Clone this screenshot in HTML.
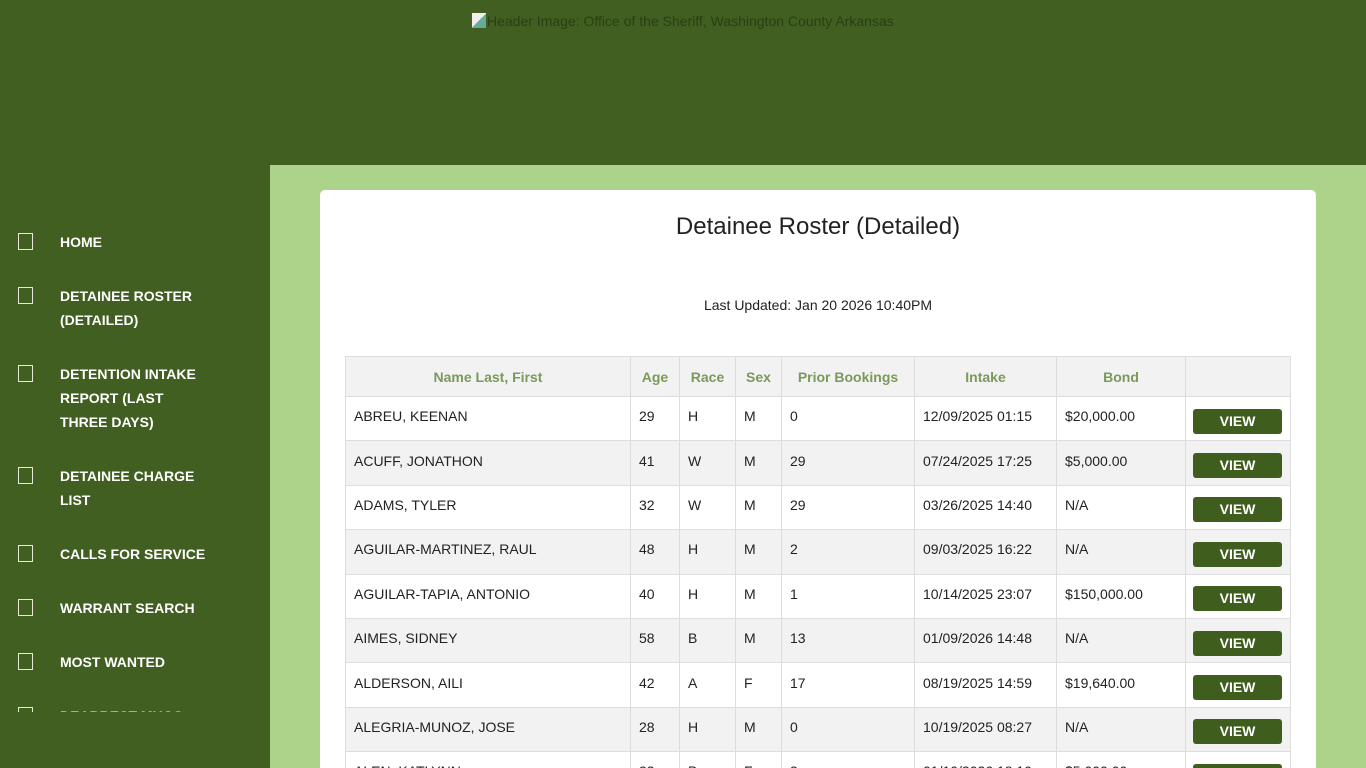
<!DOCTYPE html>
<html style="width:1366px;height:768px;overflow:hidden"><head><meta charset="utf-8"><style>
*{box-sizing:border-box;margin:0;padding:0}
body{width:1366px;height:768px;overflow:hidden;background:#415f20;font-family:"Liberation Sans",Arial,sans-serif;position:relative}
.hdr{position:absolute;left:472px;top:13px;font-size:14px;color:#2a3f14}
.hdr i{display:inline-block;width:14px;height:15px;background:linear-gradient(135deg,#eee 50%,#6a9 50%);vertical-align:-2px;margin-right:1px}
.main{position:absolute;left:270px;top:165px;width:1096px;height:603px;background:#acd38a;overflow:hidden}
.card{position:absolute;left:50px;top:25px;width:996px;height:600px;background:#fff;border-radius:5px;overflow:hidden}
h1{position:absolute;left:0;width:996px;top:23px;text-align:center;font-weight:normal;font-size:24px;color:#222}
.upd{position:absolute;left:0;width:996px;top:107px;text-align:center;font-size:14px;color:#222}
.nav{position:absolute;left:0;top:220px;width:270px;height:492px;overflow:hidden}
.it{position:absolute;left:60px;color:#fff;font-weight:bold;font-size:14px;line-height:24px;width:145px}
.it:before{content:"";position:absolute;left:-42px;top:3px;width:13px;height:15px;border:1px solid #e8e8d8}
table{position:absolute;left:25px;top:166px;width:945px;table-layout:fixed;border-collapse:collapse;font-size:14px;color:#222}
td,th{border:1px solid #ddd;height:44.4px;padding:0 8px;text-align:left;white-space:nowrap;overflow:hidden}
td{padding-bottom:5px}
th{height:40px;background:#f2f2f2;color:#7a9a5a;text-align:center;font-size:14px}
tr:nth-child(odd) td{background:#f2f2f2}
td:last-child{padding:0 7px}
.b{display:block;width:89px;height:25px;background:#3f5e1e;color:#fff;border-radius:3px;text-align:center;line-height:25px;font-weight:bold;font-size:14px;margin-top:5px}
</style></head><body>
<div class="hdr"><i></i>Header Image: Office of the Sheriff, Washington County Arkansas</div>
<div class="nav">
<div class="it" style="top:10px">HOME</div>
<div class="it" style="top:64px">DETAINEE ROSTER (DETAILED)</div>
<div class="it" style="top:142px">DETENTION INTAKE REPORT (LAST THREE DAYS)</div>
<div class="it" style="top:244px">DETAINEE CHARGE LIST</div>
<div class="it" style="top:322px;width:200px">CALLS FOR SERVICE</div>
<div class="it" style="top:376px;width:200px">WARRANT SEARCH</div>
<div class="it" style="top:430px;width:200px">MOST WANTED</div>
<div class="it" style="top:484px;width:200px">DEARREST MUGS</div>
</div>
<div class="main"><div class="card">
<h1>Detainee Roster (Detailed)</h1>
<div class="upd">Last Updated: Jan 20 2026 10:40PM</div>
<table>
<colgroup><col style="width:285px"><col style="width:49px"><col style="width:56px"><col style="width:46px"><col style="width:133px"><col style="width:142px"><col style="width:129px"><col style="width:105px"></colgroup>
<tr><th>Name Last, First</th><th>Age</th><th>Race</th><th>Sex</th><th>Prior Bookings</th><th>Intake</th><th>Bond</th><th></th></tr>
<tr><td>ABREU, KEENAN</td><td>29</td><td>H</td><td>M</td><td>0</td><td>12/09/2025 01:15</td><td>$20,000.00</td><td><span class="b">VIEW</span></td></tr>
<tr><td>ACUFF, JONATHON</td><td>41</td><td>W</td><td>M</td><td>29</td><td>07/24/2025 17:25</td><td>$5,000.00</td><td><span class="b">VIEW</span></td></tr>
<tr><td>ADAMS, TYLER</td><td>32</td><td>W</td><td>M</td><td>29</td><td>03/26/2025 14:40</td><td>N/A</td><td><span class="b">VIEW</span></td></tr>
<tr><td>AGUILAR-MARTINEZ, RAUL</td><td>48</td><td>H</td><td>M</td><td>2</td><td>09/03/2025 16:22</td><td>N/A</td><td><span class="b">VIEW</span></td></tr>
<tr><td>AGUILAR-TAPIA, ANTONIO</td><td>40</td><td>H</td><td>M</td><td>1</td><td>10/14/2025 23:07</td><td>$150,000.00</td><td><span class="b">VIEW</span></td></tr>
<tr><td>AIMES, SIDNEY</td><td>58</td><td>B</td><td>M</td><td>13</td><td>01/09/2026 14:48</td><td>N/A</td><td><span class="b">VIEW</span></td></tr>
<tr><td>ALDERSON, AILI</td><td>42</td><td>A</td><td>F</td><td>17</td><td>08/19/2025 14:59</td><td>$19,640.00</td><td><span class="b">VIEW</span></td></tr>
<tr><td>ALEGRIA-MUNOZ, JOSE</td><td>28</td><td>H</td><td>M</td><td>0</td><td>10/19/2025 08:27</td><td>N/A</td><td><span class="b">VIEW</span></td></tr>
<tr><td>ALEN, KATLYNN</td><td>33</td><td>B</td><td>F</td><td>3</td><td>01/10/2026 18:10</td><td>$5,000.00</td><td><span class="b">VIEW</span></td></tr>
</table>
</div></div>
</body></html>
